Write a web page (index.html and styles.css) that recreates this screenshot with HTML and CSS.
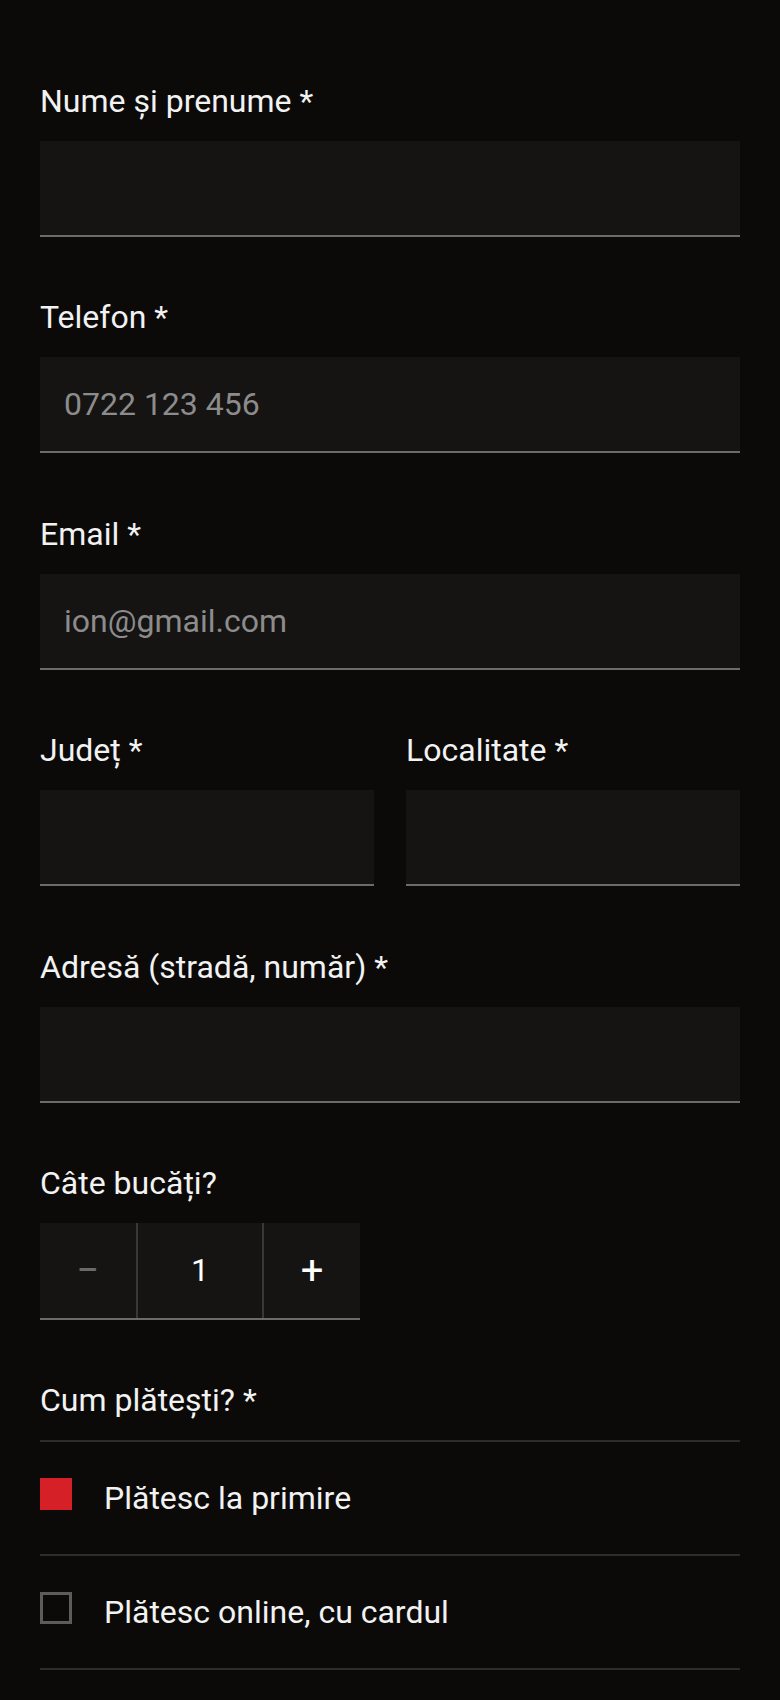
FILE: index.html
```html
<!DOCTYPE html>
<html lang="ro">
<head>
    <meta charset="UTF-8">
    <meta name="viewport" content="width=device-width, initial-scale=1.0">
    <title>Comandă</title>
    <link rel="stylesheet" href="styles.css">
</head>
<body>
<form class="order-form">
    <div class="field">
        <label class="label" for="name">Nume și prenume *</label>
        <input class="input" type="text" id="name">
    </div>
    <div class="field">
        <label class="label" for="phone">Telefon *</label>
        <input class="input" type="tel" id="phone" placeholder="0722 123 456">
    </div>
    <div class="field">
        <label class="label" for="email">Email *</label>
        <input class="input" type="email" id="email" placeholder="ion@gmail.com">
    </div>
    <div class="field-row">
        <div class="field">
            <label class="label" for="county">Județ *</label>
            <input class="input" type="text" id="county">
        </div>
        <div class="field">
            <label class="label" for="city">Localitate *</label>
            <input class="input" type="text" id="city">
        </div>
    </div>
    <div class="field">
        <label class="label" for="address">Adresă (stradă, număr) *</label>
        <input class="input" type="text" id="address">
    </div>
    <div class="field">
        <span class="label">Câte bucăți?</span>
        <div class="stepper">
            <button type="button" class="step minus" disabled>−</button>
            <span class="qty">1</span>
            <button type="button" class="step plus">+</button>
        </div>
    </div>
    <div class="field">
        <span class="label">Cum plătești? *</span>
        <div class="options">
            <label class="option">
                <span class="box checked"></span>
                <span>Plătesc la primire</span>
            </label>
            <label class="option">
                <span class="box"></span>
                <span>Plătesc online, cu cardul</span>
            </label>
        </div>
    </div>
</form>
</body>
</html>
```

FILE: styles.css
```css
body {
    margin: 0;
    background: #0b0a09;
    color: #f2f2f2;
    font-family: Roboto, "Liberation Sans", sans-serif;
    font-size: 32px;
}
.order-form {
    padding: 77px 40px 40px;
}
.field {
    display: flex;
    flex-direction: column;
    margin-bottom: 56.4px;
}
.field-row {
    display: grid;
    grid-template-columns: 1fr 1fr;
    column-gap: 32px;
}
.label {
    line-height: 48px;
    margin-bottom: 16px;
}
.input {
    box-sizing: border-box;
    width: 100%;
    height: 96px;
    padding: 0 24px;
    background: #151413;
    border: none;
    border-bottom: 2px solid #6b6b6b;
    border-radius: 0;
    color: #fff;
    font-family: inherit;
    font-size: 32px;
    outline: none;
}
.input::placeholder {
    color: #8c8c8c;
}
.stepper {
    display: flex;
    width: 320px;
    height: 97px;
    box-sizing: border-box;
    background: #151413;
    border-bottom: 2px solid #6b6b6b;
}
.step {
    width: 96px;
    background: none;
    border: none;
    padding: 0;
    color: #fff;
    font-family: inherit;
    font-size: 40px;
    cursor: pointer;
}
.step.minus {
    color: #6a6a6a;
    cursor: default;
}
.qty {
    width: 124px;
    display: flex;
    align-items: center;
    justify-content: center;
    border-left: 2px solid #383838;
    border-right: 2px solid #383838;
    color: #fff;
}
.options {
    border-top: 2px solid #2c2c2c;
}
.option {
    display: flex;
    align-items: flex-start;
    gap: 32px;
    padding: 32px 0;
    line-height: 48px;
    border-bottom: 2px solid #2c2c2c;
    cursor: pointer;
}
.box {
    box-sizing: border-box;
    width: 32px;
    height: 32px;
    margin-top: 4px;
    flex-shrink: 0;
    border: 3px solid #5c5c5c;
}
.box.checked {
    background: #d42026;
    border: none;
}
```
